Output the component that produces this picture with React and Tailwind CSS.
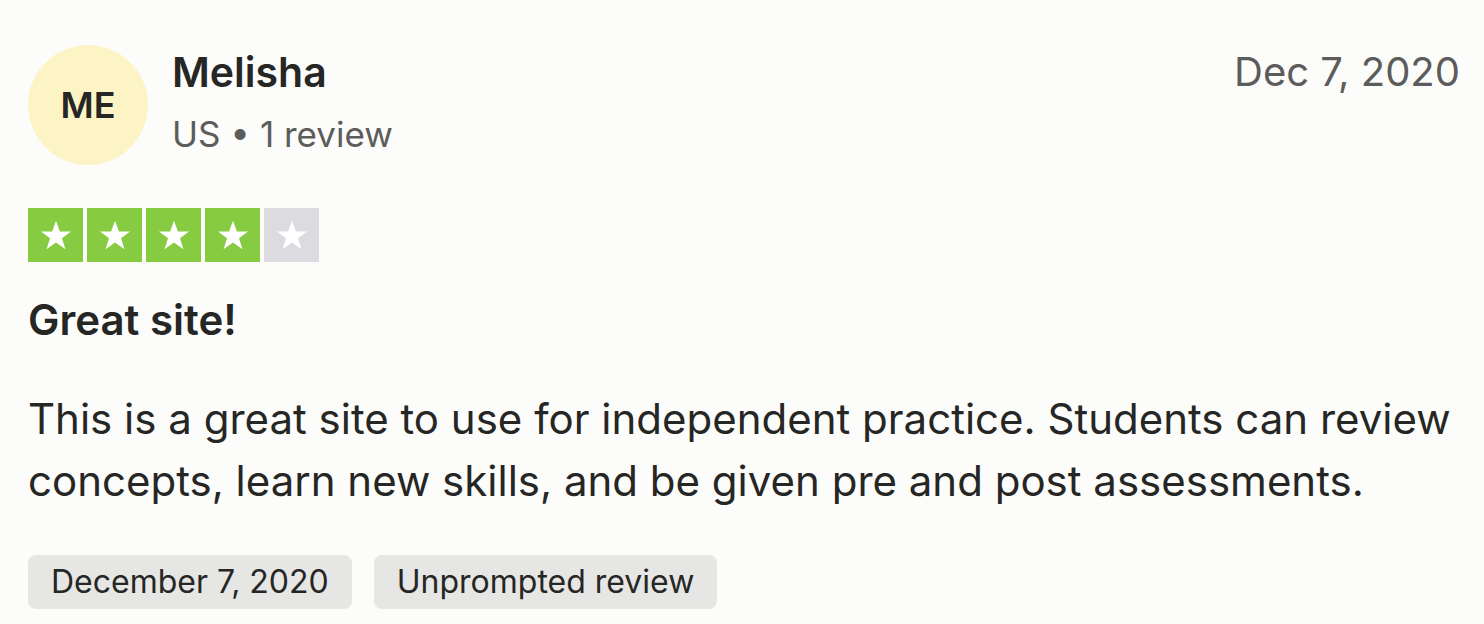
import React from "react";

function Star({ filled }) {
  return (
    <div
      className={`flex h-[54px] w-[55px] items-center justify-center ${
        filled ? "bg-[#86cb41]" : "bg-[#dcdce0]"
      }`}
    >
      <svg viewBox="0 0 24 24" className="h-[36px] w-[36px]" fill="white">
        <path d="M12 2.5l2.6 7.2h7.4l-6 4.5 2.3 7.3L12 17l-6.3 4.5 2.3-7.3-6-4.5h7.4z" />
      </svg>
    </div>
  );
}

export default function App() {
  return (
    <div
      className="h-screen w-full overflow-hidden bg-[#fcfcfb] pl-[28px] pr-[24px] pt-[45px] text-[#262624]"
      style={{ fontFamily: "Inter, 'Liberation Sans', sans-serif" }}
    >
      {/* Header */}
      <div className="flex items-start justify-between">
        <div className="flex items-start gap-6">
          <div className="flex h-[120px] w-[120px] items-center justify-center rounded-full bg-[#fcf4c4] text-[36px] font-semibold">
            ME
          </div>
          <div className="pt-[2px]">
            <div className="text-[41px] font-semibold leading-[50px]">Melisha</div>
            <div className="mt-[15px] text-[35px] leading-[44px] text-[#5c5c5a]">US • 1 review</div>
          </div>
        </div>
        <div className="pt-[2px] text-[40px] leading-[50px] text-[#5c5c5a]">Dec 7, 2020</div>
      </div>

      {/* Rating */}
      <div className="mt-[43px] flex gap-[4px]">
        <Star filled />
        <Star filled />
        <Star filled />
        <Star filled />
        <Star />
      </div>

      <div className="mt-[34px] text-[42px] font-semibold leading-[48px]">Great site!</div>

      <p className="mt-[44px] text-[42px] leading-[62px]">
        This is a great site to use for independent practice. Students can review concepts, learn new skills, and be given pre and post assessments.
      </p>

      <div className="mt-[43px] flex gap-[22px]">
        <span className="rounded-[8px] bg-[#e6e6e5] px-[23px] py-[6px] text-[32px] leading-[42px]">December 7, 2020</span>
        <span className="rounded-[8px] bg-[#e6e6e5] px-[23px] py-[6px] text-[32px] leading-[42px]">Unprompted review</span>
      </div>
    </div>
  );
}
